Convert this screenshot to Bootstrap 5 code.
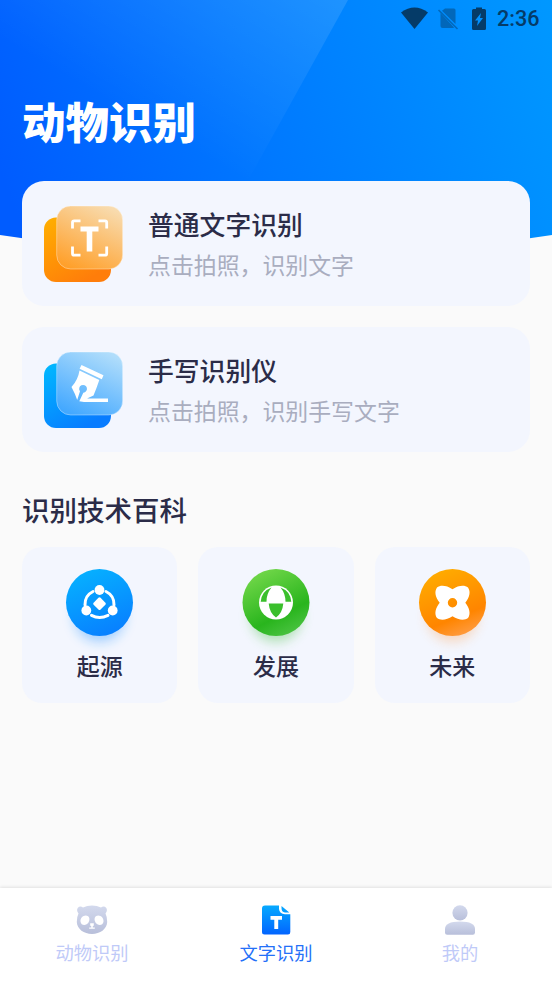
<!DOCTYPE html>
<html lang="zh-CN">
<head>
<meta charset="utf-8">
<meta name="viewport" content="width=device-width, initial-scale=1">
<title>文字识别</title>
<link href="https://cdn.jsdelivr.net/npm/bootstrap@5.3.0/dist/css/bootstrap.min.css" rel="stylesheet">
<style>
body{background:#fafafa;font-family:"Noto Sans CJK SC",sans-serif;color:#2b2c48}
.screen{height:983px;overflow:hidden}
.hero{height:260px;flex:none;background:
  linear-gradient(70deg,#005cff 5%,#0079ff 48%,#0098ff 100%);clip-path:path("M0 0H552V235Q276 277 0 235Z")}
.hero-glow{inset:0;background:linear-gradient(30deg,rgba(255,255,255,0) 38%,rgba(255,255,255,.16) 94%);clip-path:polygon(0 0,348px 0,204px 260px,0 260px)}
.status{height:38px;padding-right:12.5px;color:#053b68}
.status svg{margin-right:-1.500px}
.clock{font:500 21.600px/38px Roboto,sans-serif}
.brand-title{font-size:43.5px;font-weight:900;line-height:52px;margin:57px 0 0 22px;color:#fff}
.content{margin-top:-79px;padding:0 22px}
.tile{background:#f3f6fe;border-radius:22px}
.feature{height:124.5px;padding-left:16px}
.feature + .feature{margin-top:21.500px}
.feature-text{margin-left:20px;padding-top:2px}
.feature h2{font-size:25.8px;line-height:34px;font-weight:500;margin:0 0 7px}
.feature p{font-size:22.9px;line-height:33px;color:#a9adbf;margin:0}
.section-title{font-size:27.5px;line-height:40px;font-weight:500;margin:37px 0 18px}
.topics{gap:21px}
.topic{height:156px;border-radius:20px;padding-top:14px}
.topic span{font-size:23px;line-height:32px;font-weight:500;margin-top:-6px}
.tabs{height:95px;background:#fff;box-shadow:0 -1px 3px rgba(0,0,0,.1);padding-top:16px}
.tab{font-size:18.3px;line-height:26px;font-weight:400;color:#bfcaf8}
.tab svg{margin-bottom:3px}
.tab.on{color:#2470f8}
svg{display:block;flex:none}
</style>
</head>
<body>
<div class="screen d-flex flex-column">
  <header class="hero position-relative">
    <div class="hero-glow position-absolute"></div>
    <div class="status position-relative d-flex align-items-center justify-content-end">
      <svg width="97" height="38" viewBox="401 0 97 38">
        <path fill="currentColor" d="M401 12.5Q414.500 2.500 428 12.500L414.500 29Z"/>
        <g opacity=".45"><path fill="currentColor" d="M445 8.500H454Q455.500 8.500 455.500 10V24L442 10.800ZM440.500 13L454 27.500Q453.500 28 452.500 28H442.500Q440.500 28 440.500 26Z"/><path d="M438.500 10L457.500 29" stroke="currentColor" stroke-width="1.6"/></g>
        <path fill="currentColor" fill-rule="evenodd" d="M476 7.500H482V9H484.500Q486 9 486 10.500V28.500Q486 30 484.500 30H473.500Q472 30 472 28.500V10.500Q472 9 473.500 9H476ZM481 13L475 20.500H478L477 26L483 18H480Z"/>
      </svg>
      <span class="clock">2:36</span>
    </div>
    <h1 class="brand-title position-relative">动物识别</h1>
  </header>

  <main class="content position-relative flex-grow-1">
    <section class="tile feature d-flex align-items-center">
      <svg width="90" height="90" viewBox="38 198.500 90 90">
        <defs>
          <linearGradient id="ob" x1="0" y1="0" x2=".6" y2="1"><stop stop-color="#ffb000"/><stop offset="1" stop-color="#ff7d0a"/></linearGradient>
          <linearGradient id="of" x1=".75" y1="0" x2=".25" y2="1"><stop stop-color="#f8dbae"/><stop offset="1" stop-color="#ffa02b"/></linearGradient>
        </defs>
        <rect x="44" y="218" width="67" height="64.500" rx="12" fill="url(#ob)"/>
        <rect x="56.700" y="206.500" width="66" height="63" rx="14" fill="url(#of)" stroke="#fff" stroke-opacity=".35"/>
        <path d="M72.500 229V223Q72.500 221.300 74.200 221.300H80.500M98.500 221.300H105Q106.700 221.300 106.700 223V229M106.700 247V254Q106.700 255.700 105 255.700H98.500M80.500 255.700H74.200Q72.500 255.700 72.500 254V247" fill="none" stroke="#fff" stroke-width="2.800"/>
        <path d="M80.500 227H98.500V232H92.300V252H86.700V232H80.500Z" fill="#fff"/>
      </svg>
      <div class="feature-text">
        <h2>普通文字识别</h2>
        <p>点击拍照，识别文字</p>
      </div>
    </section>
    <section class="tile feature d-flex align-items-center">
      <svg width="90" height="90" viewBox="38 344.500 90 90">
        <defs>
          <linearGradient id="bb" x1="0" y1="0" x2=".6" y2="1"><stop stop-color="#00baff"/><stop offset="1" stop-color="#087cff"/></linearGradient>
          <linearGradient id="bf" x1=".75" y1="0" x2=".25" y2="1"><stop stop-color="#b0ddfb"/><stop offset="1" stop-color="#43a8ff"/></linearGradient>
        </defs>
        <rect x="44" y="364" width="67" height="64.500" rx="12" fill="url(#bb)"/>
        <rect x="56.700" y="352.500" width="66" height="63" rx="14" fill="url(#bf)" stroke="#fff" stroke-opacity=".35"/>
        <path fill="#fff" d="M81.500 365.500L103.500 375.800L101.800 379.800L79.600 369.200ZM79.500 371L99.300 380.500Q96.500 389 93.500 396L87 399H108V402.500H84L79.300 401.800L83.300 393.200A3.900 3.900 0 1 0 80 391.700L77.200 400.500Q75 394 71.500 387.500Q78 380.500 79.500 371Z"/>
      </svg>
      <div class="feature-text">
        <h2>手写识别仪</h2>
        <p>点击拍照，识别手写文字</p>
      </div>
    </section>

    <h2 class="section-title">识别技术百科</h2>
    <div class="topics d-flex">
      <div class="tile topic flex-fill d-flex flex-column align-items-center">
        <svg width="100" height="94" viewBox="0.500 0 100 94">
          <defs><linearGradient id="c1" x1=".2" y1="0" x2=".6" y2="1"><stop stop-color="#06b2ff"/><stop offset="1" stop-color="#0880ff"/></linearGradient>
          <filter id="soft" x="-40%" y="-40%" width="180%" height="180%"><feGaussianBlur stdDeviation="6"/></filter></defs>
          <circle cx="50" cy="55" r="26" fill="#168bff" opacity=".36" filter="url(#soft)"/>
          <circle cx="50" cy="41.500" r="33.500" fill="url(#c1)"/>
          <g transform="translate(50 42)"><path d="M-6.500 -11.500A14.500 14.500 0 0 0 -14.500 2M6.500 -11.500A14.500 14.500 0 0 1 14.500 2M-8 12.300Q0 16.500 8.500 12.300" fill="none" stroke="#fff" stroke-width="3" stroke-linecap="round"/>
          <g fill="#fff"><circle cy="-13" r="4.900"/><circle cx="-13.200" cy="7.500" r="4.900"/><circle cx="13.200" cy="7.500" r="4.900"/><rect x="-4.900" y="-4.900" width="9.800" height="9.800" rx="1.500" transform="translate(0 .7) rotate(45)"/></g></g>
        </svg>
        <span>起源</span>
      </div>
      <div class="tile topic flex-fill d-flex flex-column align-items-center">
        <svg width="100" height="94" viewBox="0 0 100 94">
          <defs><linearGradient id="c2" x1=".2" y1="0" x2=".7" y2="1"><stop stop-color="#76d94c"/><stop offset=".7" stop-color="#29b51d"/><stop offset="1" stop-color="#4bc342"/></linearGradient></defs>
          <circle cx="50" cy="55" r="26" fill="#32b72b" opacity=".34" filter="url(#soft)"/>
          <circle cx="50" cy="41.500" r="33.500" fill="url(#c2)"/>
          <g transform="translate(50 41.500)"><circle r="17" fill="#fff"/>
          <path fill="#3abf2c" d="M-15.300 -.8Q-14.500 -11.300 -4.500 -15Q-9.500 -9 -9.500 -.8ZM15.300 -.8Q14.500 -11.300 4.500 -15Q9.500 -9 9.500 -.8ZM-7.300 1H7.300Q6.500 10.500 0 15Q-6.500 10.500 -7.300 1Z"/></g>
        </svg>
        <span>发展</span>
      </div>
      <div class="tile topic flex-fill d-flex flex-column align-items-center">
        <svg width="100" height="94" viewBox="-0.500 0 100 94">
          <defs><linearGradient id="c3" x1=".2" y1="0" x2=".6" y2="1"><stop stop-color="#ffae00"/><stop offset=".75" stop-color="#ff8500"/><stop offset="1" stop-color="#ff9a3c"/></linearGradient></defs>
          <circle cx="50" cy="55" r="26" fill="#ff9234" opacity=".3" filter="url(#soft)"/>
          <circle cx="50" cy="41.500" r="33.500" fill="url(#c3)"/>
          <path transform="translate(50 41.700)" fill="#fff" fill-rule="evenodd" d="M0 -13.500C6 -17.500 12 -18 15.500 -15.300C18.500 -11 17 -5.500 12.800 0C17 5.500 18.500 11 15.500 15.300C12 18 6 17.500 0 13.500C-6 17.500 -12 18 -15.500 15.300C-18.500 11 -17 5.500 -12.800 0C-17 -5.500 -18.500 -11 -15.500 -15.300C-12 -18 -6 -17.500 0 -13.500ZM0 -4.700A4.700 4.700 0 1 0 0 4.700A4.700 4.700 0 1 0 0 -4.700Z"/>
        </svg>
        <span>未来</span>
      </div>
    </div>
  </main>

  <nav class="tabs row g-0 flex-shrink-0">
    <div class="tab col d-flex flex-column align-items-center">
      <svg width="32" height="32" viewBox="0 0 32 32">
        <defs><linearGradient id="g" x2="0" y2="1"><stop stop-color="#d3d9ed"/><stop offset="1" stop-color="#b8bfda"/></linearGradient></defs>
        <path fill="url(#g)" fill-rule="evenodd" d="M7 3.500Q11 1.500 16 1.500T25 3.500Q28 1.500 30.300 4Q31.800 6.500 29.500 9.500Q31.300 13 31.200 18C31 25 24 30 16 30S1 25 .8 18Q.7 13 2.500 9.500Q.2 6.500 1.700 4Q4 1.500 7 3.500ZM12.200 12.200C8.500 9.800 4 13.500 4.500 17.500C5 22 10.500 22 12.500 18.500C13.800 16 13.800 13.500 12.200 12.200ZM19.800 12.200C18.200 13.500 18.200 16 19.500 18.500C21.500 22 27 22 27.500 17.500C28 13.500 23.500 9.800 19.800 12.200ZM14.200 19.300H17.800V21.500L16.700 22.500V23.500H18.800V24.700H13.200V23.500H15.300V22.500L14.200 21.500Z"/>
      </svg>
      <span>动物识别</span>
    </div>
    <div class="tab on col d-flex flex-column align-items-center">
      <svg width="32" height="32" viewBox="0 0 32 32">
        <defs><linearGradient id="d" x2="0" y2="1"><stop stop-color="#06aaff"/><stop offset="1" stop-color="#0264ff"/></linearGradient></defs>
        <path fill="url(#d)" d="M5 1.500H19V5Q19.500 10 25 10.300H30.300V28Q30.300 30.500 28 30.500H4.500Q2 30.500 2 28V4.500Q2 1.500 5 1.500ZM21.500 2L29.300 8.500H25Q21.500 8 21.500 4Z"/>
        <path fill="#fff" d="M10.500 12H22V15.700H18.200V25H14.300V15.700H10.500Z"/>
      </svg>
      <span>文字识别</span>
    </div>
    <div class="tab col d-flex flex-column align-items-center">
      <svg width="32" height="32" viewBox="0 0 32 32">
        <circle cx="16" cy="8.800" r="7.600" fill="url(#g)"/>
        <path fill="url(#g)" d="M1 25Q1 17.500 16 17.500T31 25V28.500Q31 30.700 28.800 30.700H3.200Q1 30.700 1 28.500Z"/>
      </svg>
      <span>我的</span>
    </div>
  </nav>
</div>
<script src="https://cdn.jsdelivr.net/npm/bootstrap@5.3.0/dist/js/bootstrap.bundle.min.js"></script>
</body>
</html>
